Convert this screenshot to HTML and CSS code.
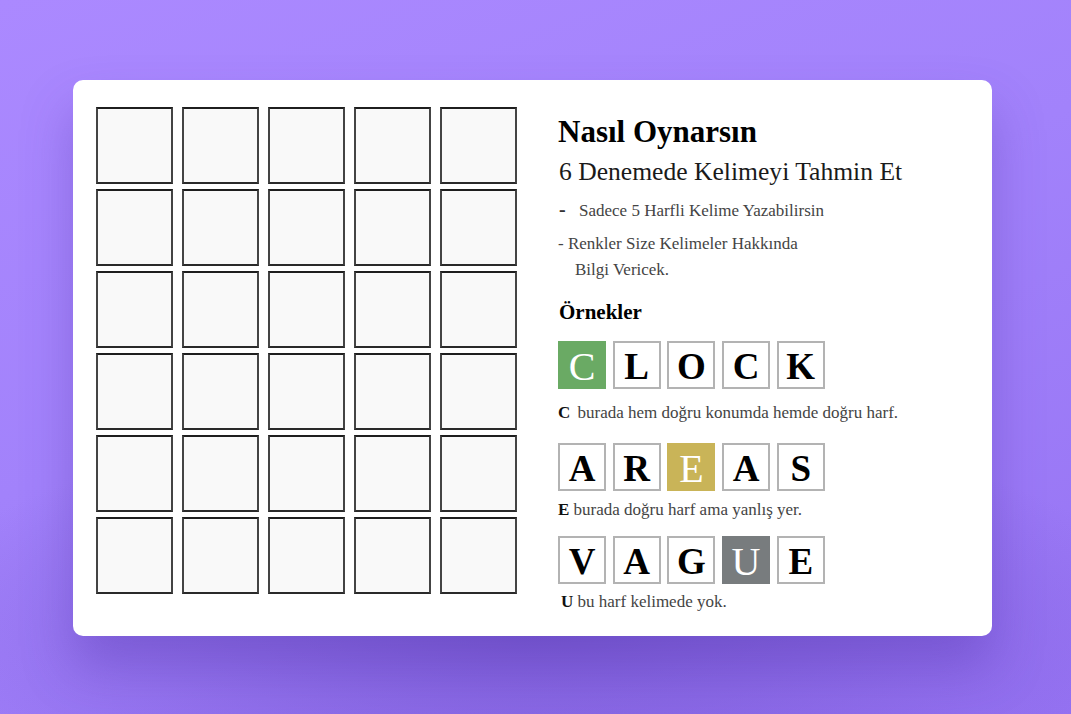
FILE: index.html
```html
<!DOCTYPE html>
<html lang="tr">
<head>
<meta charset="utf-8">
<title>Wordle</title>
<link rel="stylesheet" href="styles.css">
</head>
<body>
<main class="card">
  <section class="board">
    <div class="cell"></div><div class="cell"></div><div class="cell"></div><div class="cell"></div><div class="cell"></div>
    <div class="cell"></div><div class="cell"></div><div class="cell"></div><div class="cell"></div><div class="cell"></div>
    <div class="cell"></div><div class="cell"></div><div class="cell"></div><div class="cell"></div><div class="cell"></div>
    <div class="cell"></div><div class="cell"></div><div class="cell"></div><div class="cell"></div><div class="cell"></div>
    <div class="cell"></div><div class="cell"></div><div class="cell"></div><div class="cell"></div><div class="cell"></div>
    <div class="cell"></div><div class="cell"></div><div class="cell"></div><div class="cell"></div><div class="cell"></div>
  </section>
  <section class="help">
    <h1 class="title">Nasıl Oynarsın</h1>
    <h2 class="subtitle">6 Denemede Kelimeyi Tahmin Et</h2>
    <p class="rule rule-first"><span class="dash">-</span><span>Sadece 5 Harfli Kelime Yazabilirsin</span></p>
    <p class="rule rule-second">- Renkler Size Kelimeler Hakkında<br><span class="indent">Bilgi Vericek.</span></p>
    <h3 class="examples">Örnekler</h3>

    <div class="word w-clock">
      <span class="tile correct">C</span><span class="tile">L</span><span class="tile">O</span><span class="tile">C</span><span class="tile">K</span>
    </div>
    <p class="caption c-clock"><b class="gap">C</b> burada hem doğru konumda hemde doğru harf.</p>

    <div class="word w-areas">
      <span class="tile">A</span><span class="tile">R</span><span class="tile present">E</span><span class="tile">A</span><span class="tile">S</span>
    </div>
    <p class="caption c-areas"><b>E</b> burada doğru harf ama yanlış yer.</p>

    <div class="word w-vague">
      <span class="tile">V</span><span class="tile">A</span><span class="tile">G</span><span class="tile absent">U</span><span class="tile">E</span>
    </div>
    <p class="caption c-vague"><b>U</b> bu harf kelimede yok.</p>
  </section>
</main>
</body>
</html>
```

FILE: styles.css
```css
html, body {
  margin: 0;
  height: 100%;
}

body {
  font-family: "Liberation Serif", "Times New Roman", serif;
  background:
    radial-gradient(ellipse 60% 30% at 50% 88%, rgba(90, 60, 180, 0.45), rgba(90, 60, 180, 0) 100%),
    linear-gradient(160deg, #ab89ff 0%, #a282fb 45%, #9673f3 100%);
  padding: 80px 0 0 73px;
  box-sizing: border-box;
  overflow: hidden;
}

.card {
  width: 919px;
  height: 556px;
  box-sizing: border-box;
  background: #ffffff;
  border-radius: 10px;
  padding: 27px 23px 23px 23px;
  display: flex;
  gap: 41px;
  box-shadow: 0 30px 50px rgba(80, 50, 170, 0.35);
}

.board {
  display: grid;
  grid-template-columns: repeat(5, 77px);
  grid-template-rows: repeat(6, 77px);
  column-gap: 9px;
  row-gap: 5px;
  align-self: flex-start;
}

.cell {
  box-sizing: border-box;
  border: 2px solid #444;
  border-top-color: #1e1e1e;
  border-bottom-color: #2a2a2a;
  background: #f9f9f9;
}

.help {
  display: flex;
  flex-direction: column;
  color: #222;
}

.title {
  font-size: 31px;
  font-weight: bold;
  line-height: 36px;
  margin: 7px 0 0 0;
  color: #000;
}

.subtitle {
  font-size: 25.6px;
  font-weight: normal;
  line-height: 30px;
  margin: 7px 0 0 1px;
  color: #1a1a1a;
}

.rule {
  font-size: 17px;
  line-height: 26px;
  color: #444;
  margin: 0;
}

.rule-first {
  margin-top: 9px;
  margin-left: 1px;
  display: flex;
  align-items: baseline;
}

.dash {
  font-weight: bold;
  font-size: 20px;
  color: #333;
  width: 20px;
}

.rule-second {
  margin-top: 7px;
}

.indent {
  padding-left: 17px;
}

.examples {
  font-size: 21px;
  font-weight: bold;
  line-height: 26px;
  margin: 16px 0 0 1px;
  color: #000;
}

.word {
  display: flex;
  gap: 6.7px;
}

.w-clock { margin-top: 16px; }
.w-areas { margin-top: 17px; }
.w-vague { margin-top: 13px; }

.tile {
  box-sizing: border-box;
  width: 48px;
  height: 48px;
  border: 2px solid #b3b3b3;
  background: #fff;
  display: flex;
  align-items: center;
  justify-content: center;
  font-weight: bold;
  font-size: 37px;
  color: #000;
  line-height: 1;
  padding-top: 3px;
}

.tile.correct {
  background: #6aaa64;
  border-color: #6aaa64;
  color: #fff;
  font-weight: normal;
  font-size: 40px;
}

.tile.present {
  background: #c9b458;
  border-color: #c9b458;
  color: #fff;
  font-weight: normal;
  font-size: 40px;
}

.tile.absent {
  background: #787c7e;
  border-color: #787c7e;
  color: #fff;
  font-weight: normal;
  font-size: 40px;
}

.caption {
  font-size: 17px;
  line-height: 26px;
  color: #444;
  margin: 0;
}

.caption b {
  color: #111;
}

.caption b.gap {
  margin-right: 3px;
}

.c-clock { margin-top: 11px; }
.c-areas { margin-top: 6px; }
.c-vague { margin-top: 5px; margin-left: 3px; }
```
